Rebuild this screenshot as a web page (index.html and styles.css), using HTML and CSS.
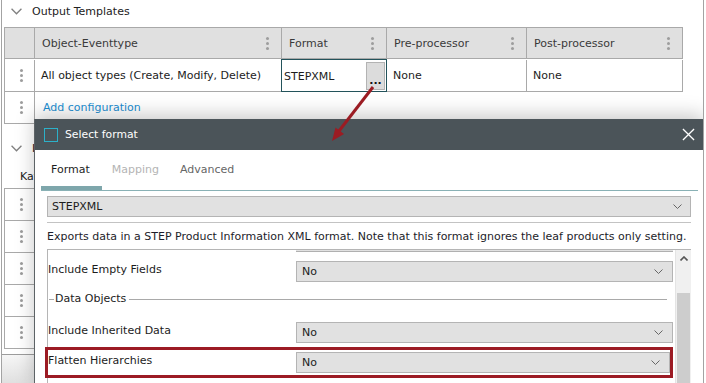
FILE: index.html
```html
<!DOCTYPE html>
<html lang="en">
<head>
  <meta charset="UTF-8"/>
  <title>Output Templates - Select format</title>
  <link rel="stylesheet" href="styles.css">
</head>
<body>
  <div class="page">
    <section class="group">
      <div class="group-head">
        <svg class="chev" viewBox="0 0 10 6"><polyline points="0.5,0.5 5,5 9.5,0.5"/></svg>
        <span>Output Templates</span>
      </div>
      <div class="grid">
        <div class="cell hd"></div>
        <div class="cell hd">Object-Eventtype<i class="kebab"></i></div>
        <div class="cell hd">Format<i class="kebab"></i></div>
        <div class="cell hd">Pre-processor<i class="kebab"></i></div>
        <div class="cell hd">Post-processor<i class="kebab"></i></div>

        <div class="cell handle"><i class="kebab"></i></div>
        <div class="cell">All object types (Create, Modify, Delete)</div>
        <div class="cell fmt"><span>STEPXML</span><button class="dots">...</button></div>
        <div class="cell">None</div>
        <div class="cell">None</div>

        <div class="cell handle"><i class="kebab"></i></div>
        <div class="cell add"><a href="#">Add configuration</a></div>
      </div>
    </section>

    <section class="group second">
      <div class="group-head">
        <svg class="chev" viewBox="0 0 10 6"><polyline points="0.5,0.5 5,5 9.5,0.5"/></svg>
        <span>Inbound Templates</span>
      </div>
      <div class="sub-label">Kafka</div>
      <div class="grid rows5">
        <div class="cell handle"><i class="kebab"></i></div><div class="cell wide"></div>
        <div class="cell handle"><i class="kebab"></i></div><div class="cell wide"></div>
        <div class="cell handle"><i class="kebab"></i></div><div class="cell wide"></div>
        <div class="cell handle"><i class="kebab"></i></div><div class="cell wide"></div>
        <div class="cell handle"><i class="kebab"></i></div><div class="cell wide"></div>
      </div>
    </section>
    <div class="hbar"></div>

    <div class="modal">
      <div class="modal-head">
        <span class="win-icon"></span>
        <span class="modal-title">Select format</span>
        <svg class="close" viewBox="0 0 14 14"><path d="M1 1L13 13M13 1L1 13"/></svg>
      </div>
      <div class="tabs">
        <span class="tab active">Format</span>
        <span class="tab disabled">Mapping</span>
        <span class="tab">Advanced</span>
      </div>
      <div class="modal-body">
        <div class="select wide-select"><span>STEPXML</span><svg class="caret" viewBox="0 0 9 5"><polyline points="0.5,0.5 4.5,4.5 8.5,0.5"/></svg></div>
        <div class="sep"></div>
        <p class="desc">Exports data in a STEP Product Information XML format. Note that this format ignores the leaf products only setting.</p>
        <div class="panel">
          <div class="list">
            <div class="peek"></div>
            <div class="field">
              <label>Include Empty Fields</label>
              <div class="select"><span>No</span><svg class="caret" viewBox="0 0 9 5"><polyline points="0.5,0.5 4.5,4.5 8.5,0.5"/></svg></div>
            </div>
            <div class="legend"><i class="tick"></i><span>Data Objects</span><i class="rule"></i></div>
            <div class="field">
              <label>Include Inherited Data</label>
              <div class="select"><span>No</span><svg class="caret" viewBox="0 0 9 5"><polyline points="0.5,0.5 4.5,4.5 8.5,0.5"/></svg></div>
            </div>
            <div class="field marked">
              <label>Flatten Hierarchies</label>
              <div class="select"><span>No</span><svg class="caret" viewBox="0 0 9 5"><polyline points="0.5,0.5 4.5,4.5 8.5,0.5"/></svg></div>
            </div>
          </div>
          <div class="vscroll">
            <svg class="up" viewBox="0 0 8 5"><polyline points="0.5,4.5 4,1 7.5,4.5"/></svg>
            <div class="thumb"></div>
          </div>
        </div>
      </div>
    </div>

    <svg class="pointer" viewBox="0 0 706 383">
      <line x1="373" y1="87" x2="339" y2="131"/>
      <polygon points="332,141 335.5,127.5 344,134"/>
    </svg>
  </div>
</body>
</html>
```

FILE: styles.css
```css
/* ===== Base ===== */
* { margin:0; padding:0; box-sizing:border-box; }
body { font-family:'DejaVu Sans',Verdana,sans-serif; font-size:11px; color:#1c1c1c; background:#fff; width:706px; height:383px; overflow:hidden; }
.page { position:relative; margin-left:1px; width:703px; height:383px; border-left:1px solid #a3a3a3; border-right:1px solid #a3a3a3; overflow:hidden; }

/* ===== Groups ===== */
.group-head { display:flex; align-items:center; height:22px; padding-left:9px; color:#222; }
.group-head .chev { width:11px; height:7px; fill:none; stroke:#808080; stroke-width:1.2; margin-right:10px; }
.group .grid { margin:5px 0 0 2px; }
.second { margin-top:13px; }
.sub-label { height:28px; padding:10px 0 0 18px; line-height:16px; }
.second .grid { margin-top:1px; }

/* ===== Grid table ===== */
.grid { display:grid; grid-template-columns:30px 247px 105px 140px 156px; grid-auto-rows:32px; width:679px; border-left:1px solid #a9a9a9; border-top:1px solid #a9a9a9; }
.grid .cell { position:relative; display:flex; align-items:center; padding-left:6px; border-right:1px solid #a9a9a9; border-bottom:1px solid #a9a9a9; white-space:nowrap; }
.grid .hd { height:31px; background:#e0e0e0; color:#3a3a3a; padding-left:7px; }
.grid .hd:first-child { padding:0; }
.grid .handle { justify-content:center; padding:0 0 0 3px; }
.grid .add { grid-column:2 / 6; border-right:none; padding-left:8px; }
.grid .add a { color:#1b8dd0; text-decoration:none; }
.grid .wide { grid-column:2 / 6; }
.kebab { position:absolute; right:12px; top:50%; width:3px; height:3px; margin-top:-1px; border-radius:50%; background:#9d9d9d; box-shadow:0 -5px 0 #9d9d9d, 0 5px 0 #9d9d9d; }
.handle .kebab { position:static; margin:0; }

.fmt { margin:-1px 0 0 -1px; border:1px solid #23535b !important; padding:0 0 0 2px !important; justify-content:space-between; }
.fmt span { padding-top:1px; }
.dots { width:19px; height:28px; margin-right:1px; background:#dcdcdc; border:1px solid #b3b3b3; font:bold 11px 'DejaVu Sans',Verdana,sans-serif; color:#111; padding-top:9px; }

.hbar { margin-top:5px; height:31px; border-top:1px solid #9c9c9c; background:linear-gradient(#f6f6f6,#dedede); }

/* ===== Modal ===== */
.modal { position:absolute; left:32px; top:119px; width:670px; height:270px; background:#fff; border-left:1px solid #5d6366; border-right:1px solid #8a8a8a; box-shadow:0 -4px 18px rgba(0,0,0,0.22); }
.modal-head { display:flex; align-items:center; height:31px; background:#4b5459; padding-left:9px; color:#fff; }
.win-icon { width:14px; height:14px; border:1.5px solid #2cb1c9; margin-right:7px; }
.modal-title { font-size:10.8px; flex:1; }
.close { width:13px; height:13px; margin-right:8px; stroke:#fff; stroke-width:1.4; }
.tabs { display:flex; height:41px; margin:0 5px 0 6px; border-bottom:1px solid #89b1b5; }
.tab { display:flex; align-items:center; height:40px; padding:2px 11px 0 10px; border-bottom:4px solid transparent; color:#666; }
.tab.active { color:#1e1e1e; border-bottom-color:#7ea6ab; padding-right:12px; }
.tab.disabled { color:#b4b4b4; }
.modal-body { padding:5px 12px 0; }

.select { display:flex; align-items:center; justify-content:space-between; height:21px; background:#e1e1e1; border:1px solid #b4b4b4; padding:0 8px 0 4px; }
.caret { width:9px; height:5px; fill:none; stroke:#666; stroke-width:1; }
.sep { margin-top:5px; border-top:1px solid #c3c3c3; }
.desc { margin:6px 0 0; height:16px; line-height:16px; color:#1d1d2a; white-space:nowrap; }
.panel { display:flex; margin-top:4px; border-top:1px solid #b5b5b5; border-left:1px solid #b5b5b5; height:140px; }
.list { flex:1; }
.peek { height:2px; margin:0 2px 4px 248px; background:#e1e1e1; border-bottom:1px solid #b0b0b0; }
.field { display:flex; align-items:center; height:31px; }
.field label { width:248px; padding-bottom:4px; }
.field .select { width:377px; padding-left:5px; padding-right:9px; }
.legend { display:flex; align-items:flex-start; height:30px; padding:5px 8px 0 1px; line-height:14px; color:#222; white-space:nowrap; }
.legend .tick { width:5px; margin-top:7px; border-top:1px solid #a9a9a9; }
.legend span { padding:0 3px 0 1px; }
.legend .rule { flex:1; margin-top:7px; border-top:1px solid #a9a9a9; }
.field.marked { margin:-1px 2px 0 -3px; height:31px; border:3px solid #9c1b24; }
.marked .select { width:374px; }
.vscroll { position:relative; width:16px; background:#f0f0f0; border-left:1px solid #e4e4e4; }
.vscroll .up { position:absolute; left:4px; top:6px; width:8px; height:5px; fill:none; stroke:#555; stroke-width:1.6; }
.vscroll .thumb { position:absolute; left:1px; right:1px; top:43px; bottom:0; background:#cdcdcd; }

/* ===== Annotation arrow ===== */
.pointer { position:absolute; left:-2px; top:0; width:706px; height:383px; pointer-events:none; }
.pointer line { stroke:#9b1c23; stroke-width:3; }
.pointer polygon { fill:#9b1c23; }
```
